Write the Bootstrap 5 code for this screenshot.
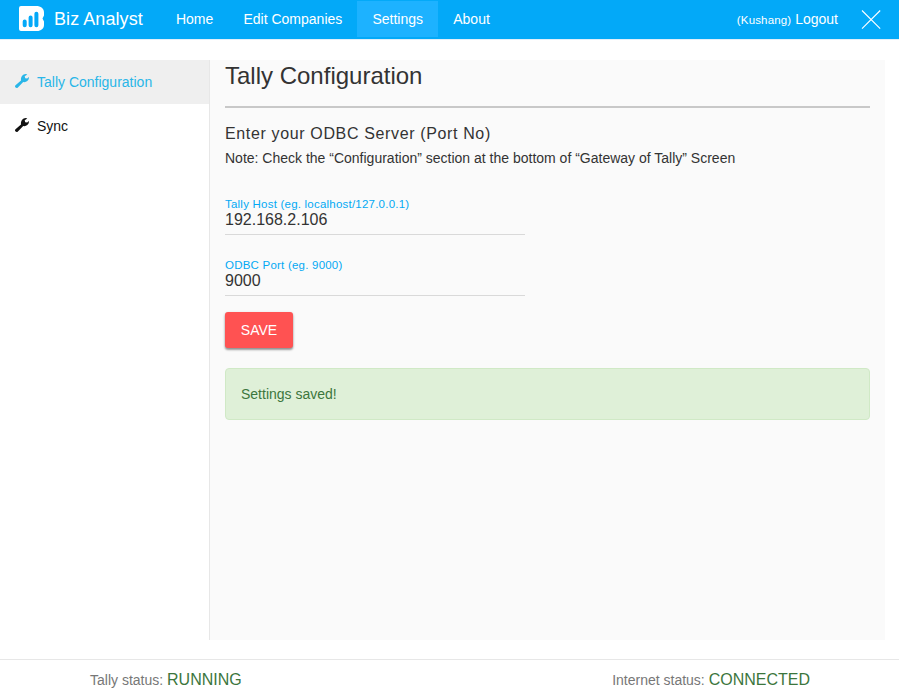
<!DOCTYPE html>
<html lang="en">
<head>
<meta charset="utf-8">
<meta name="viewport" content="width=device-width, initial-scale=1">
<title>Biz Analyst</title>
<link href="https://cdn.jsdelivr.net/npm/bootstrap@5.3.0/dist/css/bootstrap.min.css" rel="stylesheet">
<style>
body{font-family:"Liberation Sans",Arial,sans-serif;font-size:14px;line-height:20px;color:#333;background:#fff}
.topbar{height:40px;padding:0 18.5px 0 19px;background:#03a9f8;border-bottom:1px solid #e1effa}
.topbar .navbar-brand{font-size:18px;line-height:20px;color:#fff;padding:0;margin:0 18px 0 0;gap:10px;letter-spacing:.07px}
.brand-mark{margin-top:6px}
.brand-text{margin-top:9px}
.topbar .navbar-nav{margin-top:1px}
.topbar .navbar-nav .nav-link{color:#fff;padding:8px 15.1px;height:36px;line-height:20px}
.topbar .navbar-nav .nav-link.active{background:#1db2ff;color:#fff}
.topbar .navbar-nav .logout{padding-right:22.5px}
.close-mark{margin-top:10px}
.user-name{font-size:11.5px;letter-spacing:.15px}
.workspace{height:600px;padding:20px 14px 0 0}
.sidebar{width:210px;border-right:1px solid #e7e7e7}
.sidebar .nav-link{height:44px;padding:12px 15px;color:#111;gap:8px;line-height:20px}
.sidebar .nav-link.active{background:#efefef;color:#29b6e8}
.sidebar svg{margin-top:-3px}
.settings{background:#fafafa;padding:0 15px}
.settings h1{font-size:24px;line-height:32px;height:48px;margin:0 0 16px;border-bottom:2px solid #c8c8c8;font-weight:400}
.settings h2{font-size:16px;line-height:20px;letter-spacing:.64px;margin:0 0 4px;font-weight:400}
.note{margin:0 0 30px}
.field{width:300px;height:37px;margin-bottom:24px;border-bottom:1px solid #d9d9d9}
.field label{display:block;font-size:11.5px;line-height:12px;letter-spacing:.22px;color:#03a9f4}
.field input{height:20px;font-size:16px;line-height:20px;color:#333;padding:0}
.save{width:68px;height:36px;margin-top:-8px;padding:0;border:0;border-radius:3px;font-size:14px;color:#fff;background:#ff5252;box-shadow:0 2px 2px rgba(0,0,0,.3),0 1px 3px rgba(0,0,0,.22)}
.saved{margin:20px 0 0;padding:15px;font-size:14px;line-height:20px;color:#3c763d;background:#dff0d8;border:1px solid #d0e9c6;border-radius:4px}
.statusbar{height:40px;padding:10px 89px 0 90px;border-top:1px solid #e7e7e7;margin-top:19px;color:#777}
.statusbar strong{font-size:16px;font-weight:400;color:#3c763d}
</style>
<script src="https://cdn.jsdelivr.net/npm/bootstrap@5.3.0/dist/js/bootstrap.bundle.min.js"></script>
</head>
<body class="overflow-hidden">
<nav class="topbar navbar navbar-expand flex-nowrap align-items-start">
  <a class="navbar-brand d-flex align-items-start" href="#">
    <svg class="brand-mark" width="25" height="25" viewBox="0 0 25 25"><path fill="#fff" d="M2 0H17C22 0 25 2.5 25 6.5V9.5L23.5 12.5L25 15.5V19C25 22.500 22 25 18 25H2Q0 25 0 23V2Q0 0 2 0Z"/><path stroke="#03a9f8" stroke-width="4" stroke-linecap="round" d="M5.7 15.6V19.2M11.6 11.5V19.2M17.4 7.7V19.2"/></svg>
    <span class="brand-text">Biz Analyst</span>
  </a>
  <ul class="navbar-nav flex-fill">
    <li class="nav-item"><a class="nav-link" href="#">Home</a></li>
    <li class="nav-item"><a class="nav-link text-nowrap" href="#">Edit Companies</a></li>
    <li class="nav-item"><a class="nav-link active" href="#">Settings</a></li>
    <li class="nav-item"><a class="nav-link" href="#">About</a></li>
    <li class="nav-item ms-auto"><a class="nav-link logout text-nowrap" href="#"><span class="user-name">(Kushang)</span> Logout</a></li>
  </ul>
  <svg class="close-mark" width="20" height="20" viewBox="0 0 20 20" role="img" aria-label="Close"><path stroke="#fff" stroke-width="1.1" d="M1 .5L19.2 18.7M19.2 .5L1 18.7"/></svg>
</nav>
<svg class="d-none"><symbol id="wrench" viewBox="0 0 14 14"><path fill="currentColor" d="M.5 11.2L6 6.6C5.500 3.200 7.500.2 10.700 0Q11.800 0 12.300.6L9.700 2.300L10.200 4.200L12.200 4.500L13.900 3Q14.300 5.500 12.300 7.100Q10.600 8.500 8.200 8L2.900 13.400Q1.700 14.500.6 13.500Q-.6 12.300.5 11.200Z"/></symbol></svg>
<main class="workspace d-flex">
  <aside class="sidebar flex-shrink-0">
    <nav class="nav flex-column">
      <a class="nav-link active d-flex align-items-center" href="#"><svg width="14" height="14"><use href="#wrench"/></svg>Tally Configuration</a>
      <a class="nav-link d-flex align-items-center" href="#"><svg width="14" height="14"><use href="#wrench"/></svg>Sync</a>
    </nav>
  </aside>
  <section class="settings flex-fill">
    <h1>Tally Configuration</h1>
    <h2>Enter your ODBC Server (Port No)</h2>
    <p class="note">Note: Check the “Configuration” section at the bottom of “Gateway of Tally” Screen</p>
    <form>
      <div class="field"><label for="host">Tally Host (eg. localhost/127.0.0.1)</label><input id="host" class="form-control-plaintext border-0" value="192.168.2.106"></div>
      <div class="field"><label for="port">ODBC Port (eg. 9000)</label><input id="port" class="form-control-plaintext border-0" value="9000"></div>
      <button type="button" class="btn save">SAVE</button>
    </form>
    <div class="alert saved" role="alert">Settings saved!</div>
  </section>
</main>
<footer class="statusbar d-flex justify-content-between">
  <div>Tally status: <strong>RUNNING</strong></div>
  <div>Internet status: <strong>CONNECTED</strong></div>
</footer>
</body>
</html>
